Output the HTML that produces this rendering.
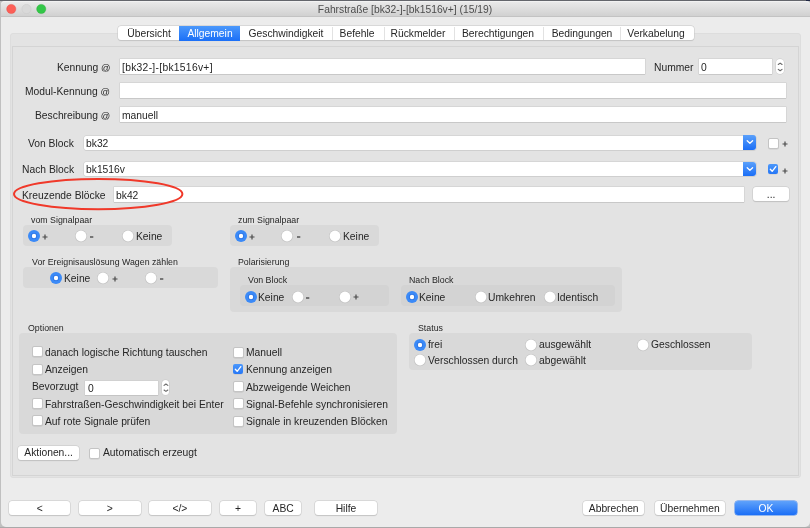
<!DOCTYPE html>
<html><head><meta charset="utf-8"><style>
html,body{margin:0;padding:0;width:810px;height:528px;overflow:hidden;background:#a9a9a9}
body{position:relative;font-family:"Liberation Sans",sans-serif}
body>div{position:absolute}
.t{white-space:nowrap;will-change:transform}
.fld{background:#fff;box-shadow:0 0 0 0.5px #c9c9c9, 0 0.5px 0.5px rgba(0,0,0,0.12)}
.btn{background:#fff;border-radius:3px;box-shadow:0 0 0 0.5px #c8c8c8, 0 0.5px 1px rgba(0,0,0,0.18)}
.btn.blue{background:linear-gradient(#5fa2fb,#1b6ef6);box-shadow:0 0 0 0.5px #3b82f0}
.rad{border-radius:50%;background:#fff;border:0.5px solid #bdbdbd;box-shadow:0 0.5px 0.5px rgba(0,0,0,0.1)}
.rad.sel{background:radial-gradient(circle,#fff 0,#fff 2px,#2f78e6 2.5px,#2f78e6 3px,#3d8ef8 3.6px,#3b8af7 100%);border:none}
.chk{background:#fff;border-radius:2px;border:0.5px solid #c4c4c4;box-shadow:0 0.5px 0.5px rgba(0,0,0,0.1)}
.chk.on{background:linear-gradient(#4c98fb,#2677f6);border:none}
.chk svg{position:absolute;left:0;top:0}
.cbtn{background:linear-gradient(#5aa0fb,#1b6ef6);border-top-right-radius:3px;border-bottom-right-radius:3px}
.cbtn svg{position:absolute;left:0;top:0}
.stp{background:#fff;border-radius:4px;box-shadow:0 0 0 0.5px #c8c8c8}
</style></head><body>
<div style="left:0px;top:0px;width:810px;height:528px;background:#c0c0c0"></div>
<div style="left:0px;top:0px;width:810px;height:1px;background:#64666c"></div>
<div style="left:806px;top:0px;width:4px;height:1px;background:#1f2744"></div>
<div style="left:0px;top:527px;width:810px;height:1px;background:#a9a9a9"></div>
<div style="left:1px;top:1px;width:809px;height:526px;background:#ececec;border-radius:4px 4px 5px 5px"></div>
<div style="left:1px;top:1px;width:809px;height:16px;background:linear-gradient(#e9e9e9,#d1d1d1);border-top:1px solid #f2f2f2;border-bottom:1px solid #c3c3c3;box-sizing:border-box;border-radius:4px 4px 0 0"></div>
<svg style="position:absolute;left:0;top:0" width="60" height="18"><circle cx="11.25" cy="9" r="4.6" fill="#fc5f57" stroke="#e3463f" stroke-width="0.4"/><circle cx="26.5" cy="9" r="4.6" fill="#d9d9d9" stroke="#c8c8c8" stroke-width="0.5"/><circle cx="41.25" cy="9" r="4.6" fill="#33c748" stroke="#28ab36" stroke-width="0.4"/></svg>
<div class="t" style="top:4px;font-size:10.3px;line-height:12px;color:#4d4d4d;left:255.0px;width:300px;text-align:center;">Fahrstraße [bk32-]-[bk1516v+] (15/19)</div>
<div style="left:10px;top:33px;width:791px;height:445px;background:#e3e3e3;border:1px solid #dddddd;border-radius:3px;box-sizing:border-box"></div>
<div style="left:12px;top:46px;width:787px;height:430px;background:#e3e3e3;border:1px solid #d4d4d4;box-sizing:border-box"></div>
<div style="left:118px;top:26px;width:576px;height:14px;background:#fff;border-radius:3px;box-shadow:0 0 0 0.5px #c8c8c8, 0 0.5px 1px rgba(0,0,0,0.15)"></div>
<div style="left:179px;top:26px;width:61.4px;height:14.8px;background:linear-gradient(#4b98fb,#1a6ff7)"></div>
<div style="left:332.2px;top:27px;width:1.0px;height:13px;background:#e2e2e2"></div>
<div style="left:383.5px;top:27px;width:1.0px;height:13px;background:#e2e2e2"></div>
<div style="left:454.3px;top:27px;width:1.0px;height:13px;background:#e2e2e2"></div>
<div style="left:543.2px;top:27px;width:1.0px;height:13px;background:#e2e2e2"></div>
<div style="left:620.4px;top:27px;width:1.0px;height:13px;background:#e2e2e2"></div>
<div class="t" style="top:28px;font-size:10.3px;line-height:12px;color:#262626;left:88.6px;width:120px;text-align:center;">Übersicht</div>
<div class="t" style="top:28px;font-size:10.3px;line-height:12px;color:#fff;left:149.7px;width:120px;text-align:center;">Allgemein</div>
<div class="t" style="top:28px;font-size:10.3px;line-height:12px;color:#262626;left:225.89999999999998px;width:120px;text-align:center;">Geschwindigkeit</div>
<div class="t" style="top:28px;font-size:10.3px;line-height:12px;color:#262626;left:297.3px;width:120px;text-align:center;">Befehle</div>
<div class="t" style="top:28px;font-size:10.3px;line-height:12px;color:#262626;left:358.2px;width:120px;text-align:center;">Rückmelder</div>
<div class="t" style="top:28px;font-size:10.3px;line-height:12px;color:#262626;left:438.2px;width:120px;text-align:center;">Berechtigungen</div>
<div class="t" style="top:28px;font-size:10.3px;line-height:12px;color:#262626;left:521.5px;width:120px;text-align:center;">Bedingungen</div>
<div class="t" style="top:28px;font-size:10.3px;line-height:12px;color:#262626;left:596.0px;width:120px;text-align:center;">Verkabelung</div>
<div class="t" style="top:62px;font-size:10.3px;line-height:12px;color:#262626;right:699.8px;">Kennung <span style="font-size:9.3px">@</span></div>
<div class="fld" style="left:120px;top:58.5px;width:524.5px;height:15.799999999999997px"></div>
<div class="t" style="top:62px;font-size:10.3px;line-height:12px;color:#262626;letter-spacing:0.29px;left:121.70px;">[bk32-]-[bk1516v+]</div>
<div class="t" style="top:62px;font-size:10.3px;line-height:12px;color:#262626;right:117px;">Nummer</div>
<div class="fld" style="left:699px;top:59px;width:73.39999999999998px;height:15.200000000000003px"></div>
<div class="t" style="top:62px;font-size:10.3px;line-height:12px;color:#262626;left:701.20px;">0</div>
<div class="stp" style="left:775.9px;top:58.7px;width:8.300000000000068px;height:15.700000000000003px;border-radius:4px"><svg width="8.300000000000068" height="15.700000000000003" style="position:absolute;left:0;top:0"><path d="M2.250000000000034 5.504200000000001 L4.150000000000034 4.1042000000000005 L6.0500000000000345 5.504200000000001 M2.250000000000034 10.352800000000002 L4.150000000000034 11.7528 L6.0500000000000345 10.352800000000002" fill="none" stroke="#666" stroke-width="1.1" stroke-linecap="round" stroke-linejoin="round"/></svg></div>
<div class="t" style="top:86px;font-size:10.3px;line-height:12px;color:#262626;right:699.8px;">Modul-Kennung <span style="font-size:9.3px">@</span></div>
<div class="fld" style="left:120px;top:83px;width:666px;height:15.299999999999997px"></div>
<div class="t" style="top:110px;font-size:10.3px;line-height:12px;color:#262626;right:699.8px;">Beschreibung <span style="font-size:9.3px">@</span></div>
<div class="fld" style="left:120px;top:106.7px;width:666px;height:15.700000000000003px"></div>
<div class="t" style="top:110px;font-size:10.3px;line-height:12px;color:#262626;left:121.70px;">manuell</div>
<div class="t" style="top:138px;font-size:10.3px;line-height:12px;color:#262626;right:736.4px;">Von Block</div>
<div class="fld" style="left:84px;top:136.0px;width:672px;height:13.999999999999995px;border-radius:2px"></div>
<div class="cbtn" style="left:743px;top:135.4px;width:13px;height:14.599999999999994px"><svg width="13" height="14.599999999999994" viewBox="0 0 13 14.599999999999994"><path d="M4.2 5.799999999999997 L6.9 8.299999999999997 L9.6 5.799999999999997" fill="none" stroke="#fff" stroke-width="1.3" stroke-linecap="round" stroke-linejoin="round"/></svg></div>
<div class="t" style="top:138px;font-size:10.3px;line-height:12px;color:#262626;left:86.20px;">bk32</div>
<div class="chk" style="left:768.4px;top:138.4px;width:9px;height:9px"></div>
<svg style="position:absolute;left:780.60px;top:140.00px" width="8" height="8"><path d="M1.5 4 H6.5 M4 1.5 V6.5" stroke="#4a4a4a" stroke-width="1.2"/></svg>
<div class="t" style="top:164px;font-size:10.3px;line-height:12px;color:#262626;right:736.4px;">Nach Block</div>
<div class="fld" style="left:84px;top:162.2px;width:672px;height:13.999999999999995px;border-radius:2px"></div>
<div class="cbtn" style="left:743px;top:161.6px;width:13px;height:14.599999999999994px"><svg width="13" height="14.599999999999994" viewBox="0 0 13 14.599999999999994"><path d="M4.2 5.799999999999997 L6.9 8.299999999999997 L9.6 5.799999999999997" fill="none" stroke="#fff" stroke-width="1.3" stroke-linecap="round" stroke-linejoin="round"/></svg></div>
<div class="t" style="top:164px;font-size:10.3px;line-height:12px;color:#262626;left:86.20px;">bk1516v</div>
<div class="chk on" style="left:768.4px;top:164.2px;width:10px;height:10px"><svg width="10" height="10" viewBox="0 0 10 10"><path d="M2.3 5.2 L4.2 7.3 L7.8 2.6" fill="none" stroke="#fff" stroke-width="1.3" stroke-linecap="round" stroke-linejoin="round"/></svg></div>
<svg style="position:absolute;left:780.60px;top:166.60px" width="8" height="8"><path d="M1.5 4 H6.5 M4 1.5 V6.5" stroke="#4a4a4a" stroke-width="1.2"/></svg>
<div class="t" style="top:190px;font-size:10.3px;line-height:12px;color:#262626;left:21.90px;">Kreuzende Blöcke</div>
<div class="fld" style="left:113.6px;top:187.3px;width:630.6999999999999px;height:15.0px"></div>
<div class="t" style="top:190px;font-size:10.3px;line-height:12px;color:#262626;left:115.80px;">bk42</div>
<div class="btn" style="left:752.8px;top:187.3px;width:36.200000000000045px;height:14.199999999999989px"></div>
<div class="t" style="top:189px;font-size:10.3px;line-height:12px;color:#262626;left:742.8px;width:56.200000000000045px;text-align:center;">...</div>
<div class="t" style="top:214px;font-size:8.8px;line-height:12px;color:#262626;left:31.40px;">vom Signalpaar</div>
<div style="left:23.3px;top:224.6px;width:148.89999999999998px;height:21.400000000000006px;background:#d9d9d9;border-radius:4px"></div>
<svg style="position:absolute;left:26.9px;top:228.9px" width="14" height="14"><circle cx="7.0" cy="7.0" r="6.0" fill="#3b8af7"/><circle cx="7.0" cy="7.0" r="3.1" fill="#2c74e4"/><circle cx="7.0" cy="7.0" r="2.2" fill="#fff"/></svg>
<svg style="position:absolute;left:41.10px;top:232.70px" width="8" height="8"><path d="M1.5 4 H6.5 M4 1.5 V6.5" stroke="#4a4a4a" stroke-width="1.2"/></svg>
<svg style="position:absolute;left:73.7px;top:229.0px" width="14" height="14"><circle cx="7.0" cy="7.3" r="6.1" fill="rgba(0,0,0,0.05)"/><circle cx="7.0" cy="7.0" r="6.0" fill="#c6c6c6"/><circle cx="7.0" cy="7.0" r="5.4" fill="#fff"/></svg>
<svg style="position:absolute;left:88.80px;top:233.90px" width="5.3" height="6"><path d="M1 3 H4.3" stroke="#555" stroke-width="1.5"/></svg>
<svg style="position:absolute;left:121.19999999999999px;top:229.0px" width="14" height="14"><circle cx="7.0" cy="7.3" r="6.1" fill="rgba(0,0,0,0.05)"/><circle cx="7.0" cy="7.0" r="6.0" fill="#c6c6c6"/><circle cx="7.0" cy="7.0" r="5.4" fill="#fff"/></svg>
<div class="t" style="top:231px;font-size:10.3px;line-height:12px;color:#262626;left:135.90px;">Keine</div>
<div class="t" style="top:214px;font-size:8.8px;line-height:12px;color:#262626;left:238.00px;">zum Signalpaar</div>
<div style="left:230px;top:224.6px;width:148.89999999999998px;height:21.400000000000006px;background:#d9d9d9;border-radius:4px"></div>
<svg style="position:absolute;left:233.6px;top:228.9px" width="14" height="14"><circle cx="7.0" cy="7.0" r="6.0" fill="#3b8af7"/><circle cx="7.0" cy="7.0" r="3.1" fill="#2c74e4"/><circle cx="7.0" cy="7.0" r="2.2" fill="#fff"/></svg>
<svg style="position:absolute;left:247.80px;top:232.70px" width="8" height="8"><path d="M1.5 4 H6.5 M4 1.5 V6.5" stroke="#4a4a4a" stroke-width="1.2"/></svg>
<svg style="position:absolute;left:280.4px;top:229.0px" width="14" height="14"><circle cx="7.0" cy="7.3" r="6.1" fill="rgba(0,0,0,0.05)"/><circle cx="7.0" cy="7.0" r="6.0" fill="#c6c6c6"/><circle cx="7.0" cy="7.0" r="5.4" fill="#fff"/></svg>
<svg style="position:absolute;left:295.50px;top:233.90px" width="5.3" height="6"><path d="M1 3 H4.3" stroke="#555" stroke-width="1.5"/></svg>
<svg style="position:absolute;left:327.9px;top:229.0px" width="14" height="14"><circle cx="7.0" cy="7.3" r="6.1" fill="rgba(0,0,0,0.05)"/><circle cx="7.0" cy="7.0" r="6.0" fill="#c6c6c6"/><circle cx="7.0" cy="7.0" r="5.4" fill="#fff"/></svg>
<div class="t" style="top:231px;font-size:10.3px;line-height:12px;color:#262626;left:342.50px;">Keine</div>
<div class="t" style="top:256px;font-size:8.8px;line-height:12px;color:#262626;left:31.50px;">Vor Ereignisauslösung Wagen zählen</div>
<div style="left:23.1px;top:266.5px;width:195.20000000000002px;height:21.100000000000023px;background:#d9d9d9;border-radius:4px"></div>
<svg style="position:absolute;left:49.1px;top:270.8px" width="14" height="14"><circle cx="7.0" cy="7.0" r="6.0" fill="#3b8af7"/><circle cx="7.0" cy="7.0" r="3.1" fill="#2c74e4"/><circle cx="7.0" cy="7.0" r="2.2" fill="#fff"/></svg>
<div class="t" style="top:273px;font-size:10.3px;line-height:12px;color:#262626;left:63.80px;">Keine</div>
<svg style="position:absolute;left:96.4px;top:270.8px" width="14" height="14"><circle cx="7.0" cy="7.3" r="6.1" fill="rgba(0,0,0,0.05)"/><circle cx="7.0" cy="7.0" r="6.0" fill="#c6c6c6"/><circle cx="7.0" cy="7.0" r="5.4" fill="#fff"/></svg>
<svg style="position:absolute;left:110.70px;top:274.60px" width="8" height="8"><path d="M1.5 4 H6.5 M4 1.5 V6.5" stroke="#4a4a4a" stroke-width="1.2"/></svg>
<svg style="position:absolute;left:143.5px;top:270.8px" width="14" height="14"><circle cx="7.0" cy="7.3" r="6.1" fill="rgba(0,0,0,0.05)"/><circle cx="7.0" cy="7.0" r="6.0" fill="#c6c6c6"/><circle cx="7.0" cy="7.0" r="5.4" fill="#fff"/></svg>
<svg style="position:absolute;left:158.60px;top:275.50px" width="5.3" height="6"><path d="M1 3 H4.3" stroke="#555" stroke-width="1.5"/></svg>
<div class="t" style="top:256px;font-size:8.8px;line-height:12px;color:#262626;left:238.40px;">Polarisierung</div>
<div style="left:230px;top:266.8px;width:391.5px;height:44.89999999999998px;background:#d9d9d9;border-radius:4px"></div>
<div class="t" style="top:274px;font-size:8.8px;line-height:12px;color:#262626;left:248.30px;">Von Block</div>
<div style="left:239.8px;top:285.3px;width:148.89999999999998px;height:21.0px;background:#d3d3d3;border-radius:4px"></div>
<svg style="position:absolute;left:243.6px;top:289.7px" width="14" height="14"><circle cx="7.0" cy="7.0" r="6.0" fill="#3b8af7"/><circle cx="7.0" cy="7.0" r="3.1" fill="#2c74e4"/><circle cx="7.0" cy="7.0" r="2.2" fill="#fff"/></svg>
<div class="t" style="top:292px;font-size:10.3px;line-height:12px;color:#262626;left:257.50px;">Keine</div>
<svg style="position:absolute;left:290.6px;top:289.7px" width="14" height="14"><circle cx="7.0" cy="7.3" r="6.1" fill="rgba(0,0,0,0.05)"/><circle cx="7.0" cy="7.0" r="6.0" fill="#c6c6c6"/><circle cx="7.0" cy="7.0" r="5.4" fill="#fff"/></svg>
<svg style="position:absolute;left:305.20px;top:294.50px" width="5.3" height="6"><path d="M1 3 H4.3" stroke="#555" stroke-width="1.5"/></svg>
<svg style="position:absolute;left:337.7px;top:289.7px" width="14" height="14"><circle cx="7.0" cy="7.3" r="6.1" fill="rgba(0,0,0,0.05)"/><circle cx="7.0" cy="7.0" r="6.0" fill="#c6c6c6"/><circle cx="7.0" cy="7.0" r="5.4" fill="#fff"/></svg>
<svg style="position:absolute;left:352.10px;top:293.40px" width="8" height="8"><path d="M1.5 4 H6.5 M4 1.5 V6.5" stroke="#4a4a4a" stroke-width="1.2"/></svg>
<div class="t" style="top:274px;font-size:8.8px;line-height:12px;color:#262626;left:408.90px;">Nach Block</div>
<div style="left:401.1px;top:285.1px;width:213.60000000000002px;height:21.399999999999977px;background:#d3d3d3;border-radius:4px"></div>
<svg style="position:absolute;left:404.8px;top:289.7px" width="14" height="14"><circle cx="7.0" cy="7.0" r="6.0" fill="#3b8af7"/><circle cx="7.0" cy="7.0" r="3.1" fill="#2c74e4"/><circle cx="7.0" cy="7.0" r="2.2" fill="#fff"/></svg>
<div class="t" style="top:292px;font-size:10.3px;line-height:12px;color:#262626;left:418.50px;">Keine</div>
<svg style="position:absolute;left:473.8px;top:289.7px" width="14" height="14"><circle cx="7.0" cy="7.3" r="6.1" fill="rgba(0,0,0,0.05)"/><circle cx="7.0" cy="7.0" r="6.0" fill="#c6c6c6"/><circle cx="7.0" cy="7.0" r="5.4" fill="#fff"/></svg>
<div class="t" style="top:292px;font-size:10.3px;line-height:12px;color:#262626;left:488.00px;">Umkehren</div>
<svg style="position:absolute;left:542.5px;top:289.7px" width="14" height="14"><circle cx="7.0" cy="7.3" r="6.1" fill="rgba(0,0,0,0.05)"/><circle cx="7.0" cy="7.0" r="6.0" fill="#c6c6c6"/><circle cx="7.0" cy="7.0" r="5.4" fill="#fff"/></svg>
<div class="t" style="top:292px;font-size:10.3px;line-height:12px;color:#262626;left:556.80px;">Identisch</div>
<div class="t" style="top:322px;font-size:8.8px;line-height:12px;color:#262626;left:27.80px;">Optionen</div>
<div style="left:19.1px;top:333.1px;width:377.5px;height:100.69999999999999px;background:#d9d9d9;border-radius:4px"></div>
<div class="chk" style="left:31.7px;top:346px;width:9px;height:9px"></div>
<div class="t" style="top:347px;font-size:10.3px;line-height:12px;color:#262626;left:44.90px;">danach logische Richtung tauschen</div>
<div class="chk" style="left:31.7px;top:363.7px;width:9px;height:9px"></div>
<div class="t" style="top:364px;font-size:10.3px;line-height:12px;color:#262626;left:44.90px;">Anzeigen</div>
<div class="chk" style="left:31.7px;top:398.2px;width:9px;height:9px"></div>
<div class="t" style="top:399px;font-size:10.3px;line-height:12px;color:#262626;left:44.90px;">Fahrstraßen-Geschwindigkeit bei Enter</div>
<div class="chk" style="left:31.7px;top:415.4px;width:9px;height:9px"></div>
<div class="t" style="top:416px;font-size:10.3px;line-height:12px;color:#262626;left:44.90px;">Auf rote Signale prüfen</div>
<div class="t" style="top:381px;font-size:10.3px;line-height:12px;color:#262626;left:31.90px;">Bevorzugt</div>
<div class="fld" style="left:85.3px;top:380.6px;width:72.89999999999999px;height:14.5px"></div>
<div class="t" style="top:383px;font-size:10.3px;line-height:12px;color:#262626;left:87.50px;">0</div>
<div class="stp" style="left:161.6px;top:380.3px;width:7.900000000000006px;height:15.199999999999989px;border-radius:4px"><svg width="7.900000000000006" height="15.199999999999989" style="position:absolute;left:0;top:0"><path d="M2.050000000000003 5.351199999999997 L3.950000000000003 3.9511999999999965 L5.850000000000003 5.351199999999997 M2.050000000000003 10.000799999999993 L3.950000000000003 11.400799999999991 L5.850000000000003 10.000799999999993" fill="none" stroke="#666" stroke-width="1.1" stroke-linecap="round" stroke-linejoin="round"/></svg></div>
<div class="chk" style="left:233.4px;top:346.8px;width:9px;height:9px"></div>
<div class="t" style="top:347px;font-size:10.3px;line-height:12px;color:#262626;left:245.80px;">Manuell</div>
<div class="chk on" style="left:233.4px;top:363.6px;width:10px;height:10px"><svg width="10" height="10" viewBox="0 0 10 10"><path d="M2.3 5.2 L4.2 7.3 L7.8 2.6" fill="none" stroke="#fff" stroke-width="1.3" stroke-linecap="round" stroke-linejoin="round"/></svg></div>
<div class="t" style="top:364px;font-size:10.3px;line-height:12px;color:#262626;left:245.80px;">Kennung anzeigen</div>
<div class="chk" style="left:233.4px;top:381.2px;width:9px;height:9px"></div>
<div class="t" style="top:382px;font-size:10.3px;line-height:12px;color:#262626;left:245.80px;">Abzweigende Weichen</div>
<div class="chk" style="left:233.4px;top:398.3px;width:9px;height:9px"></div>
<div class="t" style="top:399px;font-size:10.3px;line-height:12px;color:#262626;left:245.80px;">Signal-Befehle synchronisieren</div>
<div class="chk" style="left:233.4px;top:415.7px;width:9px;height:9px"></div>
<div class="t" style="top:416px;font-size:10.3px;line-height:12px;color:#262626;left:245.80px;">Signale in kreuzenden Blöcken</div>
<div class="t" style="top:322px;font-size:8.8px;line-height:12px;color:#262626;left:417.50px;">Status</div>
<div style="left:409px;top:333.1px;width:342.70000000000005px;height:36.89999999999998px;background:#d9d9d9;border-radius:4px"></div>
<svg style="position:absolute;left:412.6px;top:337.6px" width="14" height="14"><circle cx="7.0" cy="7.0" r="6.0" fill="#3b8af7"/><circle cx="7.0" cy="7.0" r="3.1" fill="#2c74e4"/><circle cx="7.0" cy="7.0" r="2.2" fill="#fff"/></svg>
<div class="t" style="top:339px;font-size:10.3px;line-height:12px;color:#262626;left:427.50px;">frei</div>
<svg style="position:absolute;left:524.2px;top:337.6px" width="14" height="14"><circle cx="7.0" cy="7.3" r="6.1" fill="rgba(0,0,0,0.05)"/><circle cx="7.0" cy="7.0" r="6.0" fill="#c6c6c6"/><circle cx="7.0" cy="7.0" r="5.4" fill="#fff"/></svg>
<div class="t" style="top:339px;font-size:10.3px;line-height:12px;color:#262626;left:538.60px;">ausgewählt</div>
<svg style="position:absolute;left:636.0px;top:337.6px" width="14" height="14"><circle cx="7.0" cy="7.3" r="6.1" fill="rgba(0,0,0,0.05)"/><circle cx="7.0" cy="7.0" r="6.0" fill="#c6c6c6"/><circle cx="7.0" cy="7.0" r="5.4" fill="#fff"/></svg>
<div class="t" style="top:339px;font-size:10.3px;line-height:12px;color:#262626;left:650.90px;">Geschlossen</div>
<svg style="position:absolute;left:412.6px;top:353.2px" width="14" height="14"><circle cx="7.0" cy="7.3" r="6.1" fill="rgba(0,0,0,0.05)"/><circle cx="7.0" cy="7.0" r="6.0" fill="#c6c6c6"/><circle cx="7.0" cy="7.0" r="5.4" fill="#fff"/></svg>
<div class="t" style="top:355px;font-size:10.3px;line-height:12px;color:#262626;left:427.50px;">Verschlossen durch</div>
<svg style="position:absolute;left:524.2px;top:353.2px" width="14" height="14"><circle cx="7.0" cy="7.3" r="6.1" fill="rgba(0,0,0,0.05)"/><circle cx="7.0" cy="7.0" r="6.0" fill="#c6c6c6"/><circle cx="7.0" cy="7.0" r="5.4" fill="#fff"/></svg>
<div class="t" style="top:355px;font-size:10.3px;line-height:12px;color:#262626;left:538.60px;">abgewählt</div>
<div class="btn" style="left:17.9px;top:446.1px;width:61.199999999999996px;height:13.599999999999966px"></div>
<div class="t" style="top:447px;font-size:10.3px;line-height:12px;color:#262626;left:7.900000000000006px;width:81.19999999999999px;text-align:center;">Aktionen...</div>
<div class="chk" style="left:88.8px;top:447.6px;width:9px;height:9px"></div>
<div class="t" style="top:447px;font-size:10.3px;line-height:12px;color:#262626;left:102.50px;">Automatisch erzeugt</div>
<div class="btn" style="left:8.9px;top:500.8px;width:61.50000000000001px;height:14.499999999999943px"></div>
<div class="t" style="top:503px;font-size:10.3px;line-height:12px;color:#262626;left:-1.0999999999999943px;width:81.5px;text-align:center;">&lt;</div>
<div class="btn" style="left:79px;top:500.8px;width:61.69999999999999px;height:14.499999999999943px"></div>
<div class="t" style="top:503px;font-size:10.3px;line-height:12px;color:#262626;left:69.0px;width:81.69999999999999px;text-align:center;">&gt;</div>
<div class="btn" style="left:149.4px;top:500.8px;width:61.69999999999999px;height:14.499999999999943px"></div>
<div class="t" style="top:503px;font-size:10.3px;line-height:12px;color:#262626;left:139.4px;width:81.69999999999999px;text-align:center;">&lt;/&gt;</div>
<div class="btn" style="left:220.2px;top:500.8px;width:36.10000000000002px;height:14.499999999999943px"></div>
<div class="t" style="top:503px;font-size:10.3px;line-height:12px;color:#262626;left:210.2px;width:56.10000000000002px;text-align:center;">+</div>
<div class="btn" style="left:264.9px;top:500.8px;width:36.30000000000001px;height:14.499999999999943px"></div>
<div class="t" style="top:503px;font-size:10.3px;line-height:12px;color:#262626;left:254.89999999999995px;width:56.30000000000001px;text-align:center;">ABC</div>
<div class="btn" style="left:315.3px;top:500.8px;width:62.0px;height:14.499999999999943px"></div>
<div class="t" style="top:503px;font-size:10.3px;line-height:12px;color:#262626;left:305.3px;width:82.0px;text-align:center;">Hilfe</div>
<div class="btn" style="left:582.7px;top:500.8px;width:61.39999999999998px;height:14.499999999999943px"></div>
<div class="t" style="top:503px;font-size:10.3px;line-height:12px;color:#262626;left:572.7px;width:81.39999999999998px;text-align:center;">Abbrechen</div>
<div class="btn" style="left:655px;top:500.8px;width:69.70000000000005px;height:14.499999999999943px"></div>
<div class="t" style="top:503px;font-size:10.3px;line-height:12px;color:#262626;left:645.0px;width:89.70000000000005px;text-align:center;">Übernehmen</div>
<div class="btn blue" style="left:735px;top:500.8px;width:61.700000000000045px;height:14.499999999999943px"></div>
<div class="t" style="top:503px;font-size:10.3px;line-height:12px;color:#fff;left:725.0px;width:81.70000000000005px;text-align:center;">OK</div>
<svg style="position:absolute;left:0;top:0" width="810" height="528"><ellipse cx="98.2" cy="194.1" rx="84.2" ry="15.2" fill="none" stroke="#f0392a" stroke-width="2"/></svg>
</body></html>
